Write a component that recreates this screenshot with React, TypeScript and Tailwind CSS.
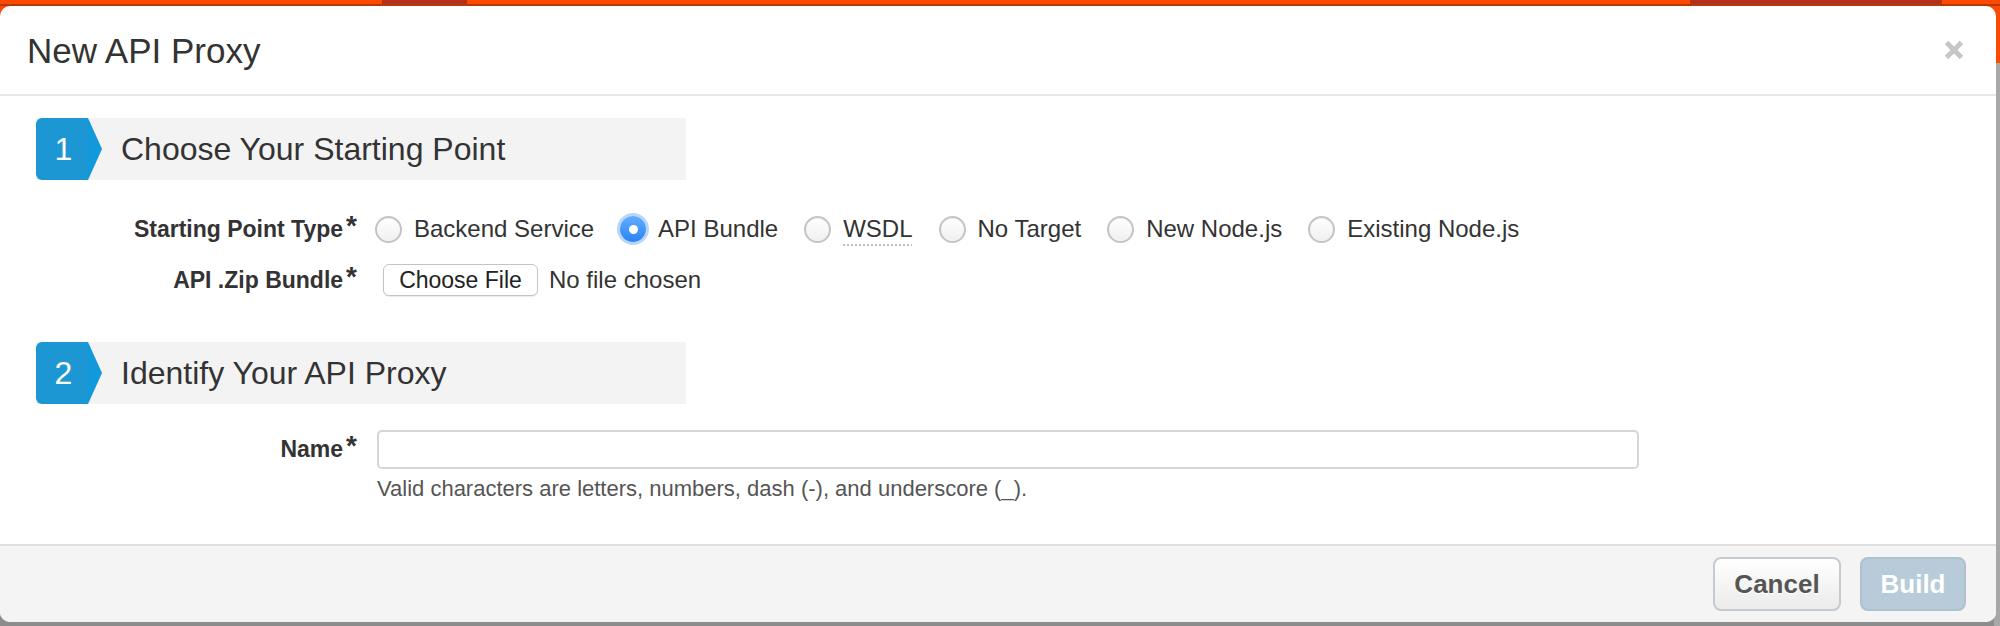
import React from "react";

function Radio({ checked }: { checked?: boolean }) {
  if (checked) {
    return (
      <span className="flex h-[26px] w-[26px] shrink-0 items-center justify-center rounded-full bg-linear-to-b from-[#62aefc] to-[#2a83f3] shadow-[0_0_0_3px_#b7d6f9]">
        <span className="h-[9px] w-[9px] rounded-full bg-white" />
      </span>
    );
  }
  return (
    <span className="h-[27px] w-[27px] shrink-0 rounded-full border-2 border-[#c4c4c4] bg-linear-to-b from-white to-[#f0f0f0] shadow-[inset_0_1px_1px_rgba(0,0,0,0.06)]" />
  );
}

function Option({ label, checked, abbr }: { label: string; checked?: boolean; abbr?: boolean }) {
  return (
    <div className="flex items-center">
      <Radio checked={checked} />
      <span
        className={
          abbr
            ? "ml-[12px] text-[24px] text-[#333] underline decoration-dotted decoration-[#bdbdbd] decoration-2 underline-offset-[7px]"
            : "ml-[12px] text-[24px] text-[#333]"
        }
      >
        {label}
      </span>
    </div>
  );
}

function StepHeader({ n, title }: { n: string; title: string }) {
  return (
    <div className="ml-[36px] flex h-[62px] w-[650px] items-center bg-[#f3f3f3]">
      <div className="flex h-full w-[52px] items-center justify-center rounded-l-[6px] bg-[#1d97d3] pl-[3px] text-[32px] leading-none text-white">
        {n}
      </div>
      <svg width="14" height="62" viewBox="0 0 14 62" className="shrink-0">
        <polygon points="0,0 14,31 0,62" fill="#1199dc" />
      </svg>
      <div className="pl-[19px] text-[32px] leading-none text-[#333]">{title}</div>
    </div>
  );
}

function Label({ text }: { text: string }) {
  return (
    <div className="w-[357px] shrink-0 text-right text-[23px] font-bold text-[#333]">
      {text}
      <span className="ml-[3px] align-[2px] text-[28px] leading-none">*</span>
    </div>
  );
}

export default function App() {
  return (
    <div className="relative h-[626px] w-[2000px] overflow-hidden bg-[#8c8c8c] font-['Liberation_Sans',Arial,Helvetica,sans-serif]">
      {/* page behind the modal */}
      <div className="absolute inset-x-0 top-0 h-[63px] bg-[#fd4a03]">
        <div className="absolute left-[382px] top-0 h-[5px] w-[85px] bg-[#b3311b]" />
        <div className="absolute left-[1690px] top-0 h-[5px] w-[252px] bg-[#b3311b]" />
        <div className="absolute inset-x-0 top-[4px] h-[2px] bg-[#b8380c]" />
      </div>
      <div className="absolute bottom-0 right-0 top-[63px] w-[6px] bg-[#a8a8a8]" />

      {/* modal */}
      <div className="absolute left-0 top-[6px] flex h-[616px] w-[1996px] flex-col overflow-hidden rounded-[10px] bg-white">
        <div className="flex h-[90px] shrink-0 items-center justify-between border-b-2 border-[#e7e7e7] pl-[27px] pr-[32px]">
          <div className="text-[35px] leading-none text-[#333]">New API Proxy</div>
          <svg width="20" height="20" viewBox="0 0 20 20">
            <line x1="2.5" y1="2.5" x2="17.5" y2="17.5" stroke="#c6c6c6" strokeWidth="5" />
            <line x1="17.5" y1="2.5" x2="2.5" y2="17.5" stroke="#c6c6c6" strokeWidth="5" />
          </svg>
        </div>

        <div className="flex flex-1 flex-col">
          <div className="mt-[22px]">
            <StepHeader n="1" title="Choose Your Starting Point" />
          </div>

          <div className="mt-[29px] flex h-[40px] items-center gap-[18px]">
            <Label text="Starting Point Type" />
            <div className="flex items-center gap-[26px]">
              <Option label="Backend Service" />
              <Option label="API Bundle" checked />
              <Option label="WSDL" abbr />
              <Option label="No Target" />
              <Option label="New Node.js" />
              <Option label="Existing Node.js" />
            </div>
          </div>

          <div className="mt-[11px] flex h-[40px] items-center gap-[18px]">
            <Label text="API .Zip Bundle" />
            <div className="ml-[8px] flex h-[32px] w-[155px] items-center justify-center rounded-[6px] border border-[#c4c4c4] bg-white text-[23px] text-[#222] shadow-[0_1px_1px_rgba(0,0,0,0.08)]">
              Choose File
            </div>
            <span className="-ml-[7px] text-[24px] text-[#333]">No file chosen</span>
          </div>

          <div className="mt-[42px]">
            <StepHeader n="2" title="Identify Your API Proxy" />
          </div>

          <div className="mt-[26px] flex h-[39px] items-center gap-[18px]">
            <Label text="Name" />
            <div className="ml-[2px] h-[39px] w-[1262px] rounded-[5px] border-2 border-[#d6d6d6] bg-white" />
          </div>

          <div className="ml-[377px] mt-[7px] text-[22px] leading-[26px] text-[#555]">
            Valid characters are letters, numbers, dash (-), and underscore (_).
          </div>
        </div>

        <div className="flex h-[78px] shrink-0 items-start justify-end gap-[19px] border-t-2 border-[#dedede] bg-[#f4f4f4] pr-[30px] pt-[11px]">
          <div className="flex h-[54px] w-[128px] items-center justify-center rounded-[8px] border-2 border-[#c3cbd0] bg-linear-to-b from-white to-[#ebebeb] text-[26px] font-bold text-[#555] [text-shadow:0_1px_0_#fff]">
            Cancel
          </div>
          <div className="flex h-[54px] w-[106px] items-center justify-center rounded-[8px] border-2 border-[#adc1cf] bg-[#b8cbd8] text-[26px] font-bold text-white">
            Build
          </div>
        </div>
      </div>
    </div>
  );
}
